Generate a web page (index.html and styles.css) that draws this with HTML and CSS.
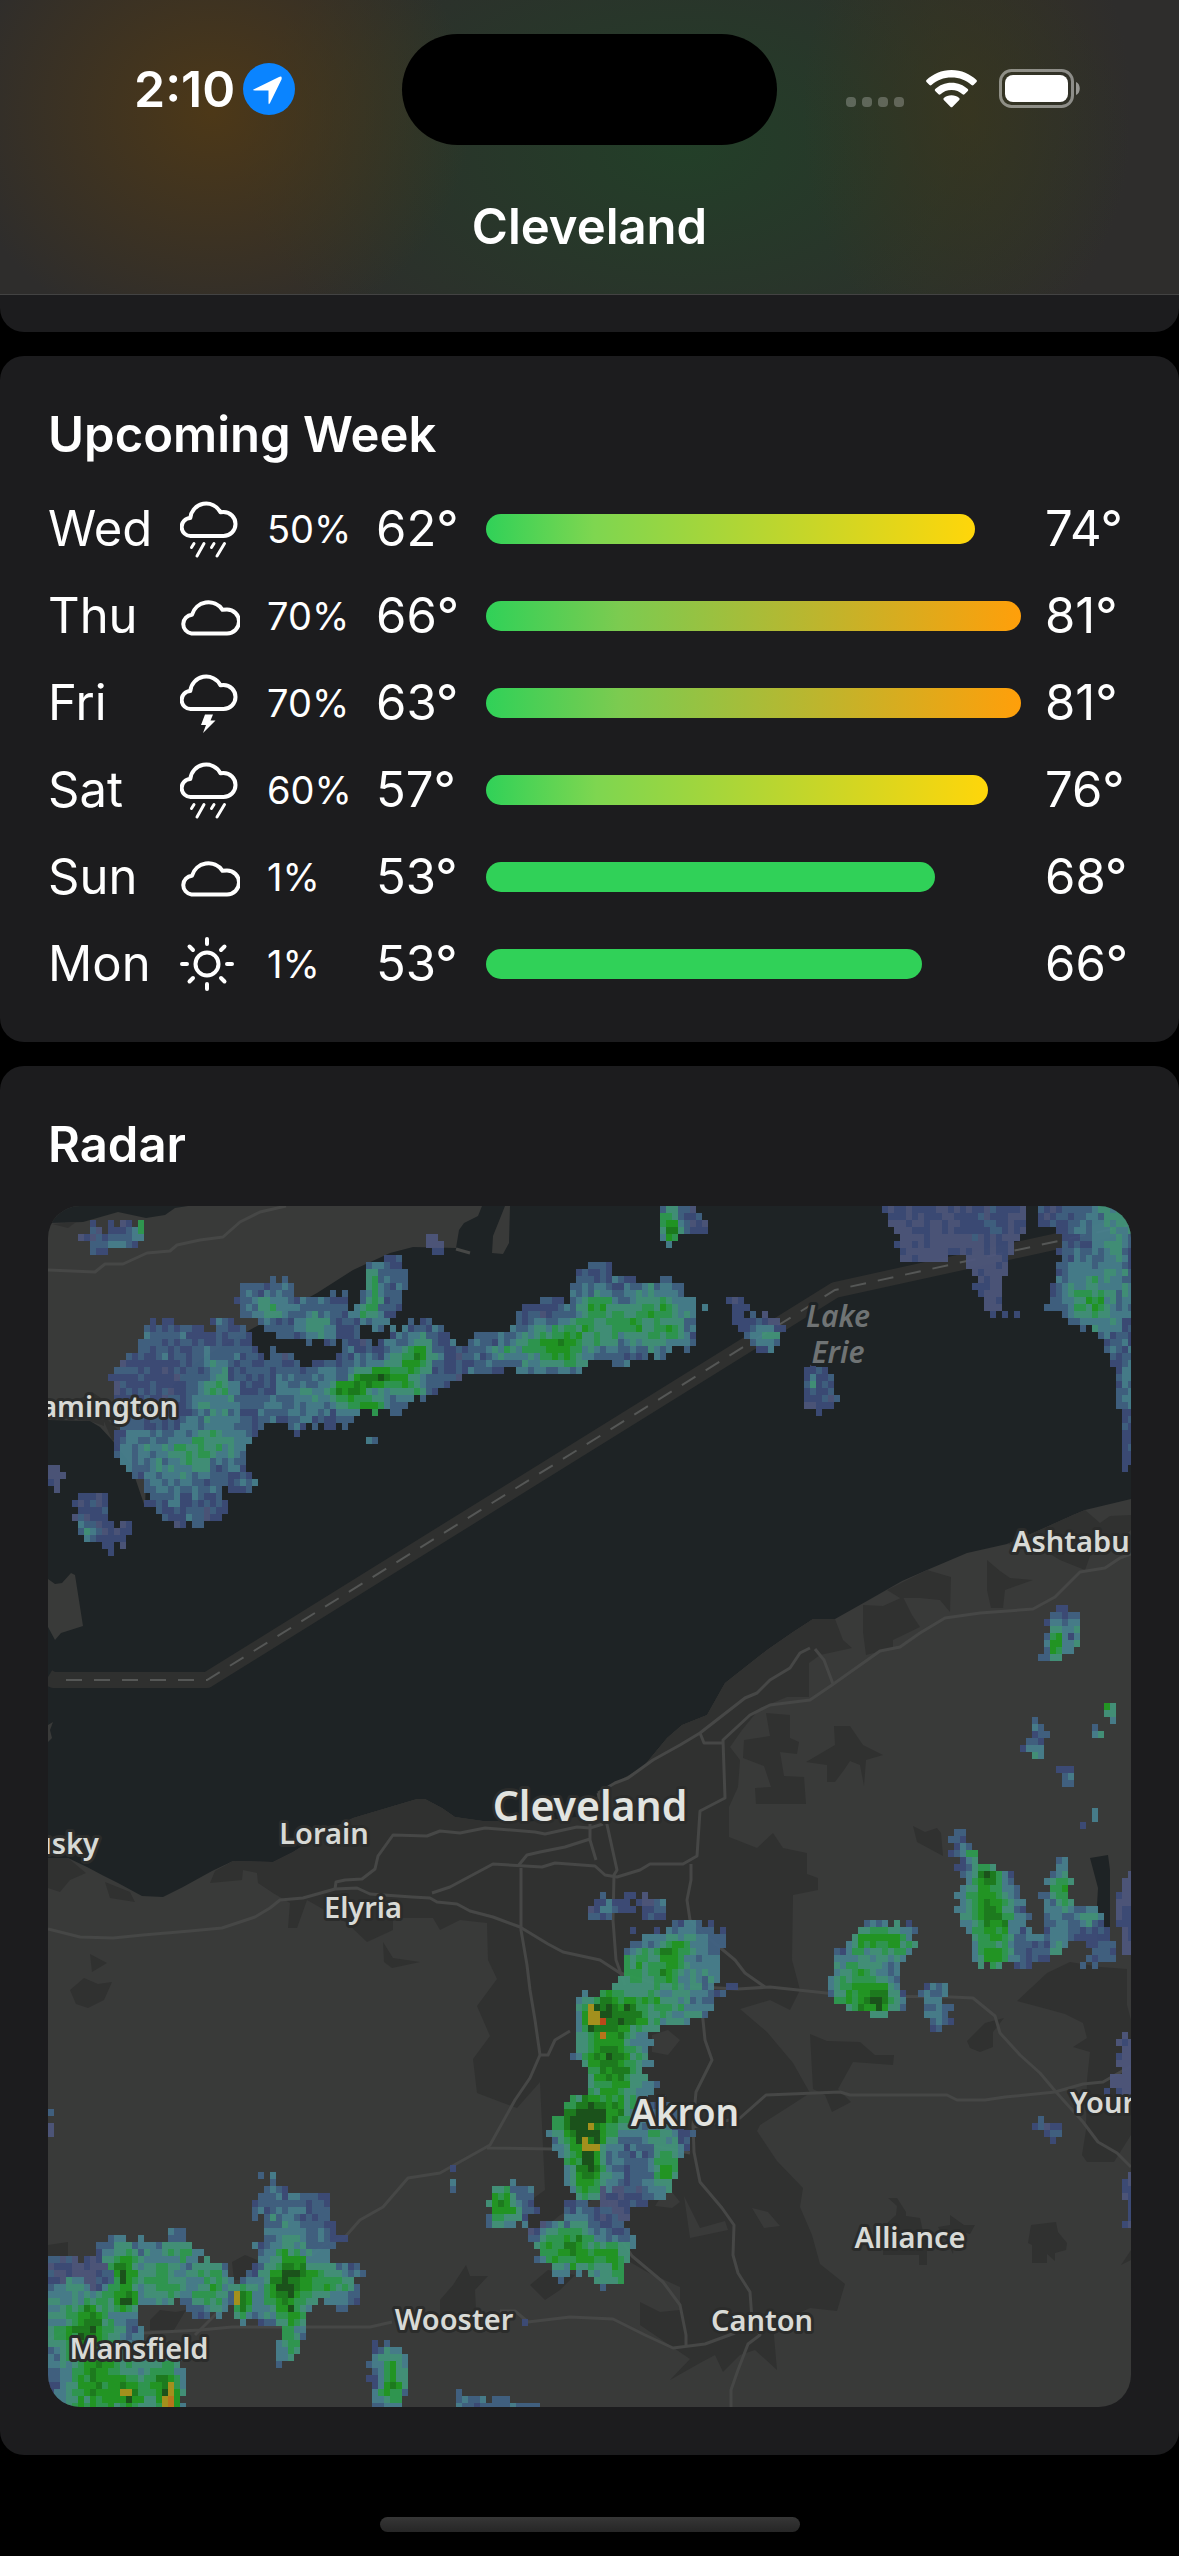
FILE: index.html
```html
<!DOCTYPE html>
<html lang="en">
<head>
	<meta charset="utf-8">
	<meta name="viewport" content="width=device-width">
	<title>Cleveland</title>
	<link rel="stylesheet" href="styles.css">
</head>
<body>

<header class="topbar">
	<div class="status">
		<div class="status-left">
			<time class="clock">2:10</time>
			<svg class="location" viewBox="0 0 52 52">
				<circle cx="26" cy="26" r="26" fill="#0a84ff"/>
				<path d="M10.5 26.5 36 14q3.500-1.500 2.500 2.500L27 40q-1.500 2.500-1.500-.5V27.500H12q-3 0-1.500-1z" fill="#fff"/>
			</svg>
		</div>
		<div class="island"></div>
		<div class="status-right">
			<svg class="signal" viewBox="0 0 58 38">
				<g fill="#fff" opacity=".24">
					<rect x="0" y="27" width="10" height="10" rx="4"/>
					<rect x="16" y="27" width="10" height="10" rx="4"/>
					<rect x="32" y="27" width="10" height="10" rx="4"/>
					<rect x="48" y="27" width="10" height="10" rx="4"/>
				</g>
			</svg>
			<svg class="wifi" viewBox="0 0 51 38">
				<g fill="#fff">
					<path d="M25.500 0C35.500 0 44 4 50.500 10q.8 1 0 1.900l-3 3.200q-1 .8-2 0C40 10 33.500 7.500 25.500 7.500S11 10 5.500 15.100q-1 .8-2 0l-3-3.200q-.8-.9 0-1.900C7 4 15.500 0 25.500 0z"/>
					<path d="M25.500 12.700c6.500 0 12 2.400 16.300 6.300q1 1 0 2l-3.300 3.300q-1 .8-2 0c-3-2.700-6.600-4.200-11-4.200s-8 1.500-11 4.200q-1 .8-2 0L9.200 21q-1-1 0-2c4.300-3.900 9.800-6.300 16.300-6.300z"/>
					<path d="M25.500 25.300c3 0 5.600 1 7.700 2.800q1 1 0 2l-6.600 6.600q-1.100 1-2.200 0l-6.600-6.600q-1-1 0-2c2.100-1.800 4.700-2.800 7.700-2.800z"/>
				</g>
			</svg>
			<svg class="battery" viewBox="0 0 82 39">
				<rect x="1.500" y="1.500" width="72" height="36" rx="11" fill="none" stroke="#fff" stroke-opacity=".45" stroke-width="3"/>
				<rect x="6" y="6" width="63" height="27" rx="8" fill="#fff"/>
				<path d="M77 13c5 2 5 11 0 13z" fill="#fff" opacity=".5"/>
			</svg>
		</div>
	</div>
	<h1>Cleveland</h1>
</header>

<main>
	<div class="card card-tail"></div>

	<section class="card">
		<h2>Upcoming Week</h2>
		<table class="week">
			<colgroup>
				<col class="col-day">
				<col class="col-icon">
				<col class="col-chance">
				<col class="col-low">
				<col>
				<col class="col-high">
			</colgroup>
			<tr>
				<th scope="row">Wed</th>
				<td><svg class="icon" viewBox="0 0 60 60"><use href="#rain"/></svg></td>
				<td class="chance">50%</td>
				<td>62°</td>
				<td><div class="bar bar-warm" style="width: 91.4%"></div></td>
				<td class="high">74°</td>
			</tr>
			<tr>
				<th scope="row">Thu</th>
				<td><svg class="icon" viewBox="0 0 60 60"><use href="#cloud"/></svg></td>
				<td class="chance">70%</td>
				<td>66°</td>
				<td><div class="bar bar-hot" style="width: 100%"></div></td>
				<td class="high">81°</td>
			</tr>
			<tr>
				<th scope="row">Fri</th>
				<td><svg class="icon" viewBox="0 0 60 60"><use href="#storm"/></svg></td>
				<td class="chance">70%</td>
				<td>63°</td>
				<td><div class="bar bar-hot" style="width: 100%"></div></td>
				<td class="high">81°</td>
			</tr>
			<tr>
				<th scope="row">Sat</th>
				<td><svg class="icon" viewBox="0 0 60 60"><use href="#rain"/></svg></td>
				<td class="chance">60%</td>
				<td>57°</td>
				<td><div class="bar bar-warm" style="width: 93.8%"></div></td>
				<td class="high">76°</td>
			</tr>
			<tr>
				<th scope="row">Sun</th>
				<td><svg class="icon" viewBox="0 0 60 60"><use href="#cloud"/></svg></td>
				<td class="chance">1%</td>
				<td>53°</td>
				<td><div class="bar" style="width: 83.9%"></div></td>
				<td class="high">68°</td>
			</tr>
			<tr>
				<th scope="row">Mon</th>
				<td><svg class="icon" viewBox="0 0 60 60"><use href="#sun"/></svg></td>
				<td class="chance">1%</td>
				<td>53°</td>
				<td><div class="bar" style="width: 81.5%"></div></td>
				<td class="high">66°</td>
			</tr>
		</table>
	</section>

	<section class="card">
		<h2>Radar</h2>
		<svg class="map" viewBox="48 1206 1083 1201">
			<rect class="land" x="48" y="1206" width="1083" height="1201"/>

			<!-- Lake St. Clair -->
			<path class="water" d="M48 1206H188L175 1208 165 1215 146 1218 118 1212 83 1222 48 1223z"/>
			<path class="urban" d="M52 1224 76 1222 68 1228z"/>
			<path class="urban" d="M78 1400 92 1392 104 1400 104 1426 90 1421 78 1420zM100 1412 128 1440 112 1440z"/>

			<!-- Lake Erie -->
			<path class="water" d="M482 1206 478 1216 464 1223 459 1230 456 1248 413 1247 390 1253 353 1270 317 1293 273 1317 220 1347 197 1362 173 1385 157 1413 147 1453 145 1507 130 1463 112 1440 100 1427 90 1421 48 1420V1858H68L87 1867 102 1875 118 1883 142 1896 163 1897 183 1887 212 1871 233 1861 273 1862 293 1852 323 1833 353 1818 390 1807 417 1799 425 1799 442 1808 455 1817 483 1821 527 1822 580 1817 600 1793 615 1783 627 1779 643 1767 667 1738 682 1725 707 1715 725 1683 767 1650 793 1632 813 1619 835 1619 867 1601 902 1581 927 1570 967 1553 1007 1544 1033 1533 1073 1515 1085 1510 1131 1499V1206z"/>
			<path class="land" d="M505 1206H510L509 1243 503 1254 492 1253 493 1236zM48 1579 55 1584 62 1583 71 1573 75 1575 83 1626 61 1633 55 1640 48 1627zM48 1725 53 1722 50 1730 52 1738 48 1742z"/>
			<path class="road" d="M456 1249 470 1253"/>

			<!-- built-up areas -->
			<g class="urban">
				<path d="M215 1871 233 1861 273 1862 293 1852 323 1833 353 1818 390 1807 417 1799 425 1799 442 1808 455 1817 483 1821 527 1822 580 1817 600 1793 615 1783 643 1767 667 1738 682 1725 707 1715 725 1683 767 1650 793 1632 813 1619 835 1619 843 1640 852 1648 820 1655 809 1663 809 1697 787 1697 760 1708 742 1730 730 1747 740 1760 738 1787 729 1807 729 1837 757 1848 773 1833 783 1848 807 1853 807 1874 818 1878 818 1890 793 1895 792 1960 800 1990 790 2010 770 2000 740 2009 767 2032 793 2063 810 2093 793 2104 760 2125 757 2131 777 2161 803 2188 800 2207 812 2235 820 2264 845 2284 837 2311 810 2308 773 2325 777 2370 755 2350 740 2355 723 2372 715 2355 700 2363 670 2380 690 2359 640 2325 640 2302 660 2312 680 2310 680 2287 647 2272 620 2256 600 2230 600 2196 560 2215 530 2240 527 2203 545 2190 540 2082 517 2108 477 2093 473 2059 490 2036 477 2006 497 1979 488 1960 487 1923 460 1920 440 1930 433 1918 393 1918 393 1930 367 1942 347 1923 307 1900 297 1928 288 1928 290 1903 273 1893 258 1883 257 1873 243 1870 242 1880 210 1883z"/>
				<path d="M766 1713 790 1715 790 1738 799 1742 797 1754 780 1752 784 1776 804 1777 806 1804 756 1804 755 1788 771 1787 764 1766 743 1758 744 1740 770 1736z"/>
				<path d="M806 1762 835 1745 834 1726 850 1726 863 1745 883 1755 866 1760 864 1786 860 1765 850 1761 844 1770 835 1782 827 1782 827 1765z"/>
				<path d="M913 1826 925 1832 937 1828 941 1833 943 1856 917 1842zM967 2041 985 2023 1004 2018 993 2032 993 2047 980 2052 970 2048z"/>
				<path d="M810 2034 827 2041 860 2042 875 2055 894 2055 893 2065 853 2062 838 2089 851 2102 832 2112 825 2095 813 2089z"/>
				<path d="M887 1590 927 1570 951 1577 950 1612 940 1600 920 1598 900 1598zM863 1605 883 1606 903 1597 912 1615 920 1627 893 1640 893 1648 866 1655 863 1632zM987 1560 1000 1571 1010 1578 1033 1580 1005 1590 1003 1608 991 1608 987 1590z"/>
				<path d="M1007 1544 1033 1533 1073 1515 1085 1510 1100 1523 1110 1516 1131 1515V1530L1115 1545 1090 1556 1085 1570 1060 1560 1040 1548z"/>
				<path d="M1017 2001 1047 1973 1070 1962 1100 1967 1127 1969 1127 2005 1131 2020V2135L1114 2162H1087L1082 2155 1086 2130 1087 2080 1090 2052 1073 2047 1087 2038 1083 2023 1065 2014 1047 2009z"/>
				<path d="M48 1858H68L86 1873 70 1880 60 1892 48 1888zM105 1882 130 1892 135 1902 110 1898zM90 1954 107 1963 92 1972z"/>
				<path d="M70 1990 84 1978 98 1984 112 1982 104 2000 88 2008 76 2004zM383 1942 393 1958 420 1962 392 1968 384 1962z"/>
				<path d="M440 2300 453 2285 466 2265 470 2276 488 2276 475 2290 476 2310 462 2330 450 2318 440 2320zM530 2285 548 2270 575 2275 560 2290 545 2300z"/>
				<path d="M48 2245 68 2242 68 2258 48 2258zM232 2262 245 2255 262 2262 260 2280 234 2280zM150 2320 160 2310 176 2312 186 2310 174 2330 150 2330z"/>
				<path d="M888 2198H897L906 2212 906 2216 920 2218 923 2232H927V2265H919V2255H883L885 2225 896 2215 897 2206z"/>
				<path d="M938 2227 950 2225V2215L964 2225H975L970 2234 955 2230 953 2254 946 2240zM1031 2225 1056 2222 1058 2232 1067 2243 1066 2250 1055 2253 1055 2261 1047 2254 1047 2263H1032V2245L1028 2243zM1121 2265 1131 2250V2260z"/>
			</g>
			<path class="land" d="M662 2195 672 2192 680 2202 672 2208 655 2206zM684 2196 700 2228 725 2221 728 2230 690 2238zM752 2208 768 2212 780 2226 764 2228zM652 2035 668 2030 680 2040 668 2055 652 2052z"/>
			<path class="water" d="M1090 1858 1108 1855 1110 1870V1940H1097V1905L1098 1888z"/>

			<g class="road">
				<path d="M48 1270 95 1272 105 1264 123 1264 147 1253 170 1251 177 1245 200 1240 223 1237 240 1222 260 1212 286 1206"/>
				<path d="M48 1929 80 1937 113 1938 143 1935 190 1931 222 1928 255 1917 270 1908 280 1900 303 1898 335 1889 357 1888 370 1894 412 1897 430 1898 437 1902 457 1904 470 1911 493 1917 520 1927 548 1944 563 1952 600 1960 620 1973 660 1985 738 1989 770 1987 826 1993 860 1996 952 1997 973 1998 995 2016 1000 2033 1020 2055 1040 2073 1056 2092 1083 2122 1098 2142 1117 2153 1131 2167"/>
				<path d="M335 1889 336 1882 345 1880 362 1879 375 1869 378 1856 393 1835 427 1836 440 1831 460 1833 485 1828 535 1832 545 1834 577 1827 590 1828 603 1824"/>
				<path d="M432 1893 450 1887 493 1864 542 1867 555 1863 595 1866 605 1875 617 1877 640 1870 650 1864 683 1864 697 1856 700 1811 725 1798 723 1740 750 1715 770 1705 810 1700 832 1685 880 1651 900 1647 920 1633 945 1618 980 1613 1033 1609 1055 1597 1080 1572 1105 1568 1120 1558 1131 1554"/>
				<path d="M598 1793 615 1783 628 1778 653 1760 680 1745 700 1733 745 1698 757 1693 770 1680 790 1668 800 1653 810 1648M815 1649 824 1660 833 1684M700 1733 704 1743H723"/>
				<path d="M598 1793 606 1820 617 1870 614 1875 613 1920 616 1960 625 1985M590 1824V1840L596 1860M590 1839 565 1847 540 1852 527 1855 518 1866"/>
				<path d="M521 1868 521 1930 527 1965 530 1990 535 2020 540 2055 530 2078 515 2100 490 2145 440 2173 408 2178 383 2207 360 2220 345 2237 325 2244 300 2265 250 2287 220 2310 195 2335M487 2148 553 2149 600 2135 690 2153M540 2055 548 2055 555 2040 570 2031"/>
				<path d="M691 1864V1880L687 1900 690 1920 705 1935 735 1960 745 1973 765 1987M702 2010 705 2040 712 2060 696 2092 693 2125 694 2152 700 2182 722 2208 734 2225 733 2255 738 2273 750 2292 752 2320 760 2335 748 2344 738 2370 731 2390V2407"/>
				<path d="M693 2127 740 2118 766 2095 840 2092 850 2095 947 2095 957 2100 985 2100 1005 2097 1055 2092 1083 2084 1103 2082 1131 2066"/>
				<path d="M606 2180 612 2225 632 2256 663 2282 680 2305 686 2335V2345M500 2311 515 2311 528 2322 570 2317 613 2319 645 2335 673 2348 705 2344 735 2333"/>
				<path d="M48 2340 68 2329 125 2334 200 2330 232 2327H370L392 2322"/>
			</g>

			<path class="border" d="M48 1677 53 1680H207L835 1290 1131 1225"/>
			<path class="border-dash" d="M66 1680H207L835 1290 1131 1225"/>

			<g id="echoes"></g>

			<g class="label">
				<text x="178" y="1417" text-anchor="end">amington</text>
				<text x="99" y="1854" text-anchor="end">usky</text>
				<text x="324" y="1844" text-anchor="middle">Lorain</text>
				<text x="363" y="1918" text-anchor="middle">Elyria</text>
				<text x="1012" y="1552">Ashtabu</text>
				<text x="1070" y="2113">Your</text>
				<text x="910" y="2248" text-anchor="middle">Alliance</text>
				<text x="762" y="2331" text-anchor="middle">Canton</text>
				<text x="454" y="2330" text-anchor="middle">Wooster</text>
				<text x="139" y="2359" text-anchor="middle">Mansfield</text>
				<text class="label-city" x="590" y="1821" text-anchor="middle">Cleveland</text>
				<text class="label-town" x="685" y="2126" text-anchor="middle">Akron</text>
				<text class="label-lake" x="838" y="1327" text-anchor="middle">Lake<tspan x="838" dy="36">Erie</tspan></text>
			</g>
		</svg>
	</section>
</main>

<footer class="home"><div class="home-bar"></div></footer>

<svg class="sprites" width="0" height="0">
	<defs>
		<g id="rain">
			<g fill="none" stroke="#fff" stroke-width="4" stroke-linecap="round" stroke-linejoin="round">
				<path d="M11 37H43.500A12 12 0 0 0 43.500 13Q42 13 40.500 13.300A16 16 0 0 0 10.300 19 9 9 0 0 0 11 37z"/>
				<path stroke-width="3" d="M14 44.500 11.500 48.500M24 44.500 17 57M34 44.500 31.500 48.500M44.500 44.500 37 57"/>
			</g>
		</g>
		<g id="storm">
			<path d="M11 36H43.500A12 12 0 0 0 43.500 12Q42 12 40.500 12.300A16 16 0 0 0 10.300 18 9 9 0 0 0 11 36z" fill="none" stroke="#fff" stroke-width="4" stroke-linejoin="round"/>
			<path d="M25 41.500H33L30.500 47.500H35.500L23 60 26 52H21z" fill="#fff"/>
		</g>
		<g id="cloud">
			<path d="M11.500 47.500H47A12 12 0 0 0 47 23.500Q45 23.500 42.500 23.800A17 17 0 0 0 12 28.800 9.400 9.400 0 0 0 11.500 47.500z" fill="none" stroke="#fff" stroke-width="4" stroke-linejoin="round"/>
		</g>
		<g id="sun" fill="none" stroke="#fff" stroke-linecap="round">
			<circle cx="27" cy="30" r="11.500" stroke-width="4"/>
			<path stroke-width="4" d="M27 5V10M27 50V55M2 30H7M47 30H52M9.500 12.500 13 16M41 44 44.500 47.500M9.500 47.500 13 44M41 16 44.500 12.500"/>
		</g>
	</defs>
</svg>

<script src="radar.js"></script>
</body>
</html>
```
FILE: styles.css
```css
* {
	box-sizing: border-box;
}
body {
	margin: 0;
	background: black;
	color: white;
	font-family: Inter, Roboto, sans-serif;
	font-size: 49px;
}
h1, h2 {
	margin: 0;
	font-size: 49px;
	font-weight: 600;
}
svg {
	display: block;
}
.sprites {
	position: absolute;
}

/* --------------- */

.topbar {
	padding-top: 34px;
	border-bottom: 1px solid #434343;
	background:
		radial-gradient(ellipse 22% 80% at 18% 38%, rgba(82,58,20,.85), rgba(82,58,20,0)),
		radial-gradient(ellipse 14% 85% at 82% 38%, rgba(60,54,28,.7), rgba(60,54,28,0)),
		radial-gradient(ellipse 38% 95% at 58% 50%, rgba(34,64,40,.95), rgba(34,64,40,0)),
		#2e2d2c;
}
.status {
	display: grid;
	grid-template-columns: 1fr 375px 1fr;
	align-items: center;
}
.status-left, .status-right {
	display: flex;
	align-items: center;
}
.status-left {
	gap: 8px;
	padding: 0 0 2px 134px;
}
.status-right {
	gap: 22px;
	justify-content: flex-end;
	padding: 0 98px 2px 0;
}
.clock {
	font-size: 50px;
	font-weight: 600;
	line-height: 60px;
}
.island {
	height: 111px;
	border-radius: 56px;
	background: black;
}
.location {
	width: 52px;
	height: 52px;
}
.signal {
	width: 58px;
	height: 38px;
}
.wifi {
	width: 51px;
	height: 38px;
}
.battery {
	width: 82px;
	height: 39px;
}
h1 {
	padding: 52px 0 37px;
	line-height: 60px;
	text-align: center;
}

/* --------------- */

main {
	display: flex;
	flex-direction: column;
	gap: 24px;
}
.card {
	padding: 48px;
	border-radius: 24px;
	background: #1c1c1e;
}
.card-tail {
	height: 37px;
	padding: 0;
	border-radius: 0 0 24px 24px;
}
h2 {
	line-height: 62px;
}

.week {
	width: 100%;
	margin: 19px 0 -13px;
	border-collapse: collapse;
	table-layout: fixed;
}
.week tr {
	height: 87px;
}
.week th, .week td {
	padding: 0;
	text-align: left;
	font-weight: 400;
}
.col-day { width: 132px; }
.col-icon { width: 87px; }
.col-chance { width: 109px; }
.col-low { width: 110px; }
.col-high { width: 110px; }

.week .chance {
	font-size: 38px;
}
.week .high {
	padding-left: 24px;
}
.icon {
	width: 60px;
	height: 60px;
}
.bar {
	height: 30px;
	border-radius: 15px;
	background: #30d158;
}
.bar-warm {
	background: linear-gradient(to right, #30d158, #7ed650 22%, #ffd60a);
}
.bar-hot {
	background: linear-gradient(to right, #30d158, #7ccb50 25%, #ff9f0a);
}

/* --------------- */

.map {
	width: 100%;
	height: auto;
	margin-top: 30px;
	border-radius: 32px;
	overflow: hidden;
}
.land { fill: #393a39; }
.water { fill: #1e2325; }
.urban { fill: #303130; }
.road {
	fill: none;
	stroke: #464746;
	stroke-width: 3;
	stroke-linejoin: round;
}
.border {
	fill: none;
	stroke: #2f302f;
	stroke-width: 16;
	stroke-linejoin: round;
}
.border-dash {
	fill: none;
	stroke: #555756;
	stroke-width: 2;
	stroke-dasharray: 16 12;
}
.label {
	font-family: "Noto Sans", "Open Sans", sans-serif;
	font-size: 29px;
	font-weight: 600;
	fill: #d8dad6;
	stroke: #2b2c2b;
	stroke-width: 6px;
	stroke-linejoin: round;
	paint-order: stroke;
}
.label-city {
	font-size: 41px;
	fill: #e2e4e0;
}
.label-town {
	font-size: 37px;
	fill: #e2e4e0;
}
.label-lake {
	font-size: 30px;
	font-style: italic;
	fill: #6f7374;
	stroke: #1e2325;
}

/* --------------- */

.home {
	display: flex;
	justify-content: center;
	padding: 62px 0 24px;
}
.home-bar {
	width: 420px;
	height: 15px;
	border-radius: 8px;
	background: linear-gradient(#363636, #262626);
}
```
FILE: radar.js
```js
// Rain echoes: an outline, a base level and the cores that raise it.
// Each core is [x, y, rx, ry, peak].
var echoes = [
	{ base: 1.4, edge: [112,1375,122,1356,140,1350,142,1330,160,1317,178,1325,205,1330,225,1318,250,1332,258,1352,270,1360,262,1395,262,1430,250,1445,240,1460,258,1480,250,1493,220,1488,228,1508,215,1520,190,1525,178,1532,160,1518,148,1500,142,1480,122,1465,115,1440,122,1415,113,1395],
	  cores: [[215,1395,22,50,2], [195,1445,32,18,2.7], [170,1475,28,18,2], [135,1435,15,24,1.5]] },
	{ base: 1.6, edge: [236,1290,250,1282,285,1281,300,1292,320,1295,345,1295,352,1310,362,1290,368,1262,380,1258,390,1250,400,1262,412,1285,405,1300,395,1318,378,1328,355,1325,360,1340,345,1345,310,1342,285,1340,265,1325,240,1322],
	  cores: [[268,1302,18,14,2], [315,1320,16,18,2.3], [372,1288,7,20,4], [360,1308,8,8,3]] },
	{ base: 1.5, edge: [255,1370,275,1350,300,1362,325,1360,345,1345,370,1345,390,1335,410,1320,425,1318,440,1328,460,1345,470,1335,495,1330,520,1322,520,1302,560,1300,575,1295,575,1275,592,1262,612,1262,615,1278,640,1282,685,1282,690,1300,698,1320,700,1345,665,1355,650,1358,622,1366,590,1358,575,1375,535,1377,500,1370,480,1375,450,1382,440,1392,415,1400,400,1412,370,1412,350,1425,325,1425,300,1432,280,1425,262,1422],
	  cores: [[345,1387,20,9,4.8], [370,1376,20,9,4.5], [366,1402,20,8,4.5], [405,1385,16,8,3.6], [395,1366,30,14,2.8], [415,1350,14,14,4], [300,1395,28,18,1.8], [530,1343,40,14,2.8], [560,1335,24,12,3], [610,1322,35,22,3.2], [660,1312,24,24,3], [668,1328,12,8,2], [595,1300,14,12,2.3], [560,1358,16,10,2.5]] },
	{ base: 1, edge: [659,1206,700,1206,705,1228,695,1235,678,1237,678,1243,660,1243,658,1220], cores: [[667,1225,9,18,6]] },
	{ base: 1, edge: [728,1312,733,1296,743,1297,745,1312,765,1312,778,1320,784,1345,770,1352,752,1346,740,1330], cores: [[762,1333,14,9,3.4]] },
	{ base: 1.2, edge: [805,1362,820,1362,830,1372,837,1385,832,1398,843,1402,830,1412,805,1406,807,1385], cores: [[808,1378,6,8,2]] },
	{ base: .1, edge: [884,1206,1026,1206,1023,1230,1018,1245,1005,1262,1002,1285,1000,1300,1017,1316,992,1316,978,1295,972,1270,962,1252,945,1260,932,1262,900,1258,898,1235,890,1220], cores: [[990,1225,30,25,1]] },
	{ base: 1.4, edge: [1038,1206,1135,1206,1135,1472,1128,1470,1122,1450,1118,1400,1112,1362,1098,1335,1078,1328,1060,1312,1048,1308,1050,1285,1058,1260,1060,1232,1040,1228],
	  cores: [[1085,1295,26,28,3], [1115,1210,25,18,2.2], [1110,1260,30,60,1], [1130,1375,12,40,1.5]] },
	{ base: 1, edge: [82,1240,94,1222,100,1230,127,1222,145,1222,143,1240,138,1250,120,1247,105,1258,95,1252], cores: [[140,1225,9,9,3.6], [112,1240,12,6,2]] },
	{ base: .8, edge: [73,1495,100,1495,112,1510,112,1525,132,1520,132,1535,125,1543,110,1552,95,1545,80,1540,75,1522], cores: [[85,1528,9,12,2]] },
	{ base: .6, edge: [46,1478,55,1464,61,1465,61,1487,46,1487], cores: [] },
	{ base: .3, edge: [422,1236,438,1236,447,1248,436,1258,425,1246], cores: [] },
	{ base: .2, edge: [600,1200,612,1200,612,1214,600,1214], cores: [] },
	{ base: 1.4, edge: [587,1905,602,1896,632,1896,632,1910,607,1918,593,1920], cores: [[603,1908,6,6,2]] },
	{ base: .8, edge: [640,1896,667,1896,672,1908,665,1920,640,1920], cores: [[660,1900,5,5,2]] },

	// Akron line
	{ base: 1.7, edge: [626,1945,640,1940,655,1935,675,1922,700,1920,710,1932,726,1928,727,1945,718,1955,722,1970,718,1985,722,1990,715,2005,700,2018,680,2030,655,2028,650,2045,652,2060,640,2075,660,2078,658,2095,640,2100,675,2100,680,2120,691,2130,690,2150,675,2165,673,2190,655,2200,640,2205,600,2200,585,2202,568,2190,565,2165,555,2150,548,2140,555,2115,570,2100,590,2085,583,2065,573,2058,575,2040,572,2025,578,2000,577,1993,595,1995,612,1985,625,1975,626,1960],
	  cores: [[592,2016,9,12,5], [608,2018,28,32,4.2], [605,2055,26,14,3.6], [612,2074,22,14,3.4], [600,2108,34,18,4.8], [573,2122,20,14,3], [583,2150,20,46,4.8], [586,2162,9,16,2.4], [635,1958,16,14,3], [664,1965,14,20,4.2], [662,2165,14,24,3.6], [658,2130,12,10,2.4], [655,2008,28,14,2.6], [690,1970,28,32,1.4], [618,2000,20,20,1.8], [676,1945,14,10,2.4]] },
	{ base: 1.4, edge: [487,2192,505,2182,525,2182,537,2195,535,2212,525,2222,505,2225,495,2235,487,2222], cores: [[498,2203,11,22,4.6], [515,2212,8,10,2]] },
	{ base: 1.5, edge: [527,2230,545,2225,562,2215,568,2200,600,2205,622,2220,631,2228,632,2250,625,2265,620,2285,605,2290,590,2275,570,2272,560,2285,555,2272,540,2262,538,2245],
	  cores: [[556,2244,26,22,4], [577,2244,10,26,2.4], [600,2250,26,14,2.4], [612,2266,18,18,3]] },
	{ base: .9, edge: [527,2226,542,2224,542,2240,527,2242], cores: [] },
	{ base: .6, edge: [600,2190,645,2190,640,2208,600,2204], cores: [] },
	{ base: .6, edge: [600,2190,625,2195,632,2215,622,2222], cores: [] },

	// east
	{ base: 1.6, edge: [832,1970,838,1948,852,1945,860,1928,878,1922,910,1924,917,1930,913,1950,908,1960,896,1968,898,1985,906,1990,903,2012,880,2020,860,2015,845,2008,830,1992,826,1985],
	  cores: [[870,1935,18,12,5.2], [898,1940,14,16,3.4], [846,1980,18,22,3.4], [876,1988,14,10,4.4], [872,2002,20,10,4.6], [868,1965,20,14,1.8]] },
	{ base: 1.2, edge: [920,1990,925,1983,945,1983,948,2005,950,2025,935,2033,925,2010], cores: [[935,2000,10,18,2.4]] },
	{ base: 1.3, edge: [952,1850,958,1822,964,1835,975,1845,982,1860,1000,1870,1015,1880,1022,1895,1028,1910,1033,1935,1030,1955,1040,1962,1020,1968,1005,1965,975,1965,975,1945,960,1930,957,1900,962,1880,960,1865],
	  cores: [[984,1873,12,10,5.4], [978,1900,18,28,3.6], [996,1915,18,24,4], [990,1953,18,14,3.8], [972,1850,10,8,3]] },
	{ base: 1.6, edge: [1058,1855,1065,1862,1073,1870,1072,1900,1080,1905,1095,1905,1105,1915,1105,1935,1115,1945,1112,1967,1085,1965,1092,1950,1082,1940,1062,1942,1060,1955,1040,1965,1027,1968,1030,1935,1045,1935,1040,1920,1043,1895,1048,1878],
	  cores: [[1060,1888,13,22,4], [1054,1948,8,15,3], [1088,1915,12,12,2]] },
	{ base: .2, edge: [1135,1868,1122,1880,1115,1915,1120,1960,1135,1955], cores: [] },
	{ base: .3, edge: [1135,2030,1120,2035,1118,2070,1107,2090,1135,2095], cores: [] },
	{ base: .5, edge: [1140,2172,1125,2172,1125,2188,1119,2188,1119,2202,1125,2202,1125,2223,1140,2223], cores: [] },
	{ base: 1.6, edge: [1045,1620,1058,1605,1072,1611,1078,1625,1075,1655,1060,1657,1050,1663,1040,1660,1047,1645], cores: [[1054,1638,7,14,5.5], [1075,1632,6,24,2]] },
	{ base: 2.6, edge: [1105,1701,1117,1707,1116,1722,1105,1722], cores: [[1106,1704,5,8,2.500]] },
	{ base: 2.8, edge: [1094,1728,1105,1728,1105,1737,1094,1737], cores: [] },
	{ base: 1.2, edge: [1034,1714,1040,1722,1050,1730,1048,1742,1038,1757,1025,1755,1025,1744,1032,1740,1028,1722], cores: [[1034,1724,8,6,2.5], [1032,1748,9,6,2.5]] },
	{ base: 1.2, edge: [1060,1758,1070,1765,1078,1787,1060,1787], cores: [[1066,1775,6,5,2]] },
	{ base: 2.8, edge: [1092,1809,1100,1809,1100,1818,1092,1818], cores: [] },
	{ base: 1, edge: [1038,2113,1045,2120,1060,2120,1062,2139,1038,2139], cores: [] },

	// south-west
	{ base: 1.6, edge: [247,2166,262,2172,275,2180,290,2190,305,2198,310,2193,332,2193,333,2215,340,2230,350,2240,333,2245,333,2262,361,2266,358,2308,335,2308,320,2300,308,2312,305,2335,290,2365,275,2365,277,2340,285,2330,260,2325,240,2320,232,2300,233,2280,245,2275,258,2265,258,2250,248,2245,262,2240,265,2225,253,2215,253,2203,262,2195,270,2185,255,2178],
	  cores: [[290,2262,20,26,4], [278,2283,18,12,4.6], [238,2296,10,14,6.6], [280,2306,20,12,3], [325,2280,26,18,3], [288,2330,12,30,3], [285,2210,18,20,1]] },
	{ base: 1.7, edge: [44,2260,85,2258,95,2250,95,2242,115,2238,145,2240,160,2245,170,2238,167,2225,178,2228,190,2240,198,2252,195,2262,225,2262,232,2270,232,2300,222,2315,205,2320,190,2312,175,2300,160,2307,148,2305,135,2300,140,2325,145,2340,150,2350,170,2345,180,2355,186,2380,186,2410,44,2410],
	  cores: [[120,2272,14,24,5.4], [125,2298,10,8,3.6], [162,2275,18,24,3.4], [180,2245,14,12,2.2], [210,2284,18,24,3.8], [60,2320,50,40,2.2], [90,2325,18,26,3.2], [85,2380,18,36,4], [120,2385,22,28,4.6], [128,2392,8,8,2.6], [165,2386,14,30,5.2], [168,2398,7,14,2.8]] },
	{ base: .7, edge: [44,2258,95,2256,120,2280,95,2290,75,2275,60,2285,44,2280], cores: [] },
	{ base: 1.5, edge: [368,2352,385,2345,400,2345,406,2362,410,2382,405,2400,395,2410,375,2410,368,2390], cores: [[389,2378,12,28,4.6]] },
	{ base: 2, edge: [455,2400,463,2388,467,2398,478,2400,500,2400,540,2405,540,2410,460,2410], cores: [] },
	{ base: .6, edge: [44,2100,54,2102,54,2114,44,2114], cores: [] },
	{ base: .8, edge: [44,2121,52,2121,52,2136,44,2136], cores: [] }
];

// lone cells: x, y, level
var cells = [
	[450,2165,1], [450,2179,3], [450,2186,2], [372,2340,1], [522,2319,1], [522,2214,1],
	[366,1437,3], [372,1437,2], [702,1304,3], [1080,1822,1],
	[600,2018,11], [600,2032,10], [588,2004,9], [588,2011,9], [594,2011,9], [588,2018,9], [594,2018,9],
	[582,2137,9], [582,2144,9], [588,2144,9], [594,2144,9], [588,2123,9],
	[726,1983,1], [732,1983,1], [630,1927,1], [654,1927,1], [708,1920,1],
	[120,2389,9], [126,2389,9], [168,2382,9], [168,2389,9], [162,2396,9], [168,2396,10], [162,2403,9], [168,2403,10],
	[234,2298,9], [234,2291,9]
];

var colors = ["#4e567b", "#3d4b78", "#416283", "#47808d", "#43947a", "#2f9b51", "#219a22", "#1c7e1d", "#1a541a", "#aa961c", "#be781a", "#c24a18"];
var CW = 6, CH = 7;

function hash(x, y) {
	var n = Math.sin(x * 127.1 + y * 311.7) * 43758.5453;
	return n - Math.floor(n);
}

function inside(x, y, p) {
	var hit = false;
	for (var i = 0, j = p.length - 2; i < p.length; j = i, i += 2) {
		if ((p[i + 1] > y) != (p[j + 1] > y) &&
			x < (p[j] - p[i]) * (y - p[i + 1]) / (p[j + 1] - p[i + 1]) + p[i]) {
			hit = !hit;
		}
	}
	return hit;
}

// moves a position to the corner of its cell
function snap(x, y) {
	return (48 + Math.floor((x - 48) / CW) * CW) + "," + (1206 + Math.floor((y - 1206) / CH) * CH);
}

var grid = {};
echoes.forEach(function(echo) {
	for (var y = 1206; y < 2407; y += CH) {
		for (var x = 48; x < 1131; x += CW) {
			var px = x + CW / 2 + (hash(x, y) - .5) * 7;
			var py = y + CH / 2 + (hash(y, x) - .5) * 7;
			if (!inside(px, py, echo.edge)) { continue; }
			var v = echo.base + (hash(x + 3, y) - .5) * 1.7 + (hash(x >> 4, y >> 4) - .5) * 1.2;
			echo.cores.forEach(function(c) {
				var dx = (x - c[0]) / c[2], dy = (y - c[1]) / c[3];
				v += c[4] * Math.exp(-(dx * dx + dy * dy) * .8);
			});
			grid[snap(x, y)] = Math.max(0, Math.min(8, Math.round(v)));
		}
	}
});
cells.forEach(function(c) {
	grid[snap(c[0], c[1])] = c[2];
});

var paths = colors.map(function() { return ""; });
Object.keys(grid).forEach(function(key) {
	paths[grid[key]] += "M" + key + "h" + CW + "v" + CH + "h-" + CW + "z";
});

var holder = document.getElementById("echoes");
paths.forEach(function(d, i) {
	var path = document.createElementNS("http://www.w3.org/2000/svg", "path");
	path.setAttribute("d", d);
	path.setAttribute("fill", colors[i]);
	path.setAttribute("fill-opacity", ".94");
	path.setAttribute("shape-rendering", "crispEdges");
	holder.appendChild(path);
});
```
